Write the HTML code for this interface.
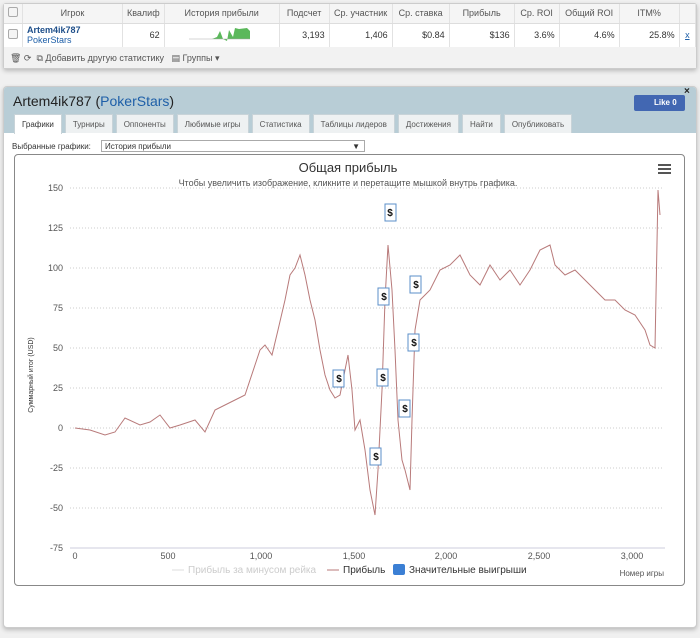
<!DOCTYPE html>
<html><head><meta charset="utf-8"><style>
*{box-sizing:border-box;margin:0;padding:0}
body{width:700px;height:638px;background:#f0f0f0;font-family:"Liberation Sans","DejaVu Sans",sans-serif;font-size:9px;color:#333;position:relative;overflow:hidden}
.p1{position:absolute;left:3px;top:3px;width:694px;height:66px;background:#fff;border:1px solid #ccc;border-radius:3px;box-shadow:0 2px 4px #bbb}
table{border-collapse:collapse;position:absolute;left:0;top:0;width:692px}
td{border-right:1px solid #e2e2e2;padding:0 4px;height:19px;text-align:right;white-space:nowrap;overflow:hidden}
tr.h td{background:#f5f5f5;text-align:center;color:#555;border-bottom:1px solid #ddd}
tr.d td{height:24px;border-bottom:1px solid #ddd}
.cb{display:inline-block;width:10px;height:10px;border:1px solid #aaa;border-radius:2px;background:#f4f4f4}
.tb{position:absolute;left:0;top:43px;width:692px;height:21px;background:#f2f2f2;color:#555;padding:6px 6px;font-size:9px}
.p2{position:absolute;left:3px;top:86px;width:694px;height:542px;background:#fff;border:1px solid #ccc;border-radius:4px;box-shadow:0 2px 4px #bbb;overflow:hidden}
.hd{position:absolute;left:0;top:0;width:694px;height:46px;background:#b8cdd6}
.title{position:absolute;left:9px;top:6px;font-size:14px;color:#222}
.title span{color:#1e5fa8}
.like{position:absolute;right:13px;top:8px;width:51px;height:16px;background:#4267b2;border-radius:2px;color:#fff;font-size:8px;font-weight:bold;line-height:16px;padding-left:20px}
.tabs{position:absolute;left:10px;top:27px}
.tab{float:left;height:19px;margin-right:3px;background:#eef1f2;border:1px solid #c8d3d8;border-bottom:none;padding:5px 7px 0;font-size:8px;color:#555}
.tab.a{background:#fff;color:#333;height:20px}
.sel{position:absolute;left:8px;top:55px;font-size:8px;color:#333}
.sel div{position:absolute;left:89px;top:-2px;width:264px;height:12px;border:1px solid #aaa;padding:1px 3px;white-space:nowrap}
.chart{position:absolute;left:10px;top:67px;width:671px;height:432px;border:1px solid #888;border-radius:4px}
</style></head><body>
<div class="p1">
<table>
<tr class="h"><td style="width:17px"><span class="cb"></span></td><td style="width:100px">Игрок</td><td style="width:35px">Квалиф</td><td style="width:115px">История прибыли</td><td style="width:50px">Подсчет</td><td style="width:63px">Ср. участник</td><td style="width:57px">Ср. ставка</td><td style="width:65px">Прибыль</td><td style="width:45px">Ср. ROI</td><td style="width:60px">Общий ROI</td><td style="width:60px">ITM%</td><td></td></tr>
<tr class="d"><td><span class="cb"></span></td><td style="text-align:left;line-height:10px"><b style="color:#1e4f8a">Artem4ik787</b><br><span style="color:#1e5fa8">PokerStars</span></td><td>62</td><td style="text-align:center"><svg width="70" height="18"><path d="M2 14 L25 14 L30 12 L33 6 L36 14 L40 16 L42 5 L46 12 L48 3 L52 4 L60 3 L63 6 L63 14 L30 14Z" fill="#5bb85b"/><line x1="2" y1="14" x2="63" y2="14" stroke="#aaa" stroke-width=".5"/></svg></td><td>3,193</td><td>1,406</td><td>$0.84</td><td>$136</td><td>3.6%</td><td>4.6%</td><td>25.8%</td><td style="text-align:center;color:#1e5fa8;text-decoration:underline">x</td></tr>
</table>
<div class="tb">🗑 ⟳ &nbsp;⧉ Добавить другую статистику &nbsp;&nbsp;▤ Группы ▾</div>
</div>
<div style="position:absolute;left:684px;top:86px;font-size:10px;font-weight:bold;color:#222;z-index:3">×</div>
<div class="p2">
<div class="hd">
<div class="title">Artem4ik787 (<span>PokerStars</span>)</div>
<div class="like">Like 0</div>
<div class="tabs"><div class="tab a">Графики</div><div class="tab">Турниры</div><div class="tab">Оппоненты</div><div class="tab">Любимые игры</div><div class="tab">Статистика</div><div class="tab">Таблицы лидеров</div><div class="tab">Достижения</div><div class="tab">Найти</div><div class="tab">Опубликовать</div></div>
</div>
<div class="sel">Выбранные графики:<div>История прибыли<span style="position:absolute;right:4px">▼</span></div></div>
<div class="chart"></div>
</div>
<svg style="position:absolute;left:0;top:0" width="700" height="638" font-family="Liberation Sans, DejaVu Sans, sans-serif">
<g stroke="#ccc" stroke-dasharray="1,2" stroke-width="1">
<line x1="70" x2="662" y1="188" y2="188"/><line x1="70" x2="662" y1="228" y2="228"/><line x1="70" x2="662" y1="268" y2="268"/><line x1="70" x2="662" y1="308" y2="308"/><line x1="70" x2="662" y1="348" y2="348"/><line x1="70" x2="662" y1="388" y2="388"/><line x1="70" x2="662" y1="428" y2="428"/><line x1="70" x2="662" y1="468" y2="468"/><line x1="70" x2="662" y1="508" y2="508"/></g>
<line x1="70" x2="665" y1="548" y2="548" stroke="#ccd" stroke-width="1"/>
<g font-size="9" fill="#555" text-anchor="end"><text x="63" y="191">150</text><text x="63" y="231">125</text><text x="63" y="271">100</text><text x="63" y="311">75</text><text x="63" y="351">50</text><text x="63" y="391">25</text><text x="63" y="431">0</text><text x="63" y="471">-25</text><text x="63" y="511">-50</text><text x="63" y="551">-75</text></g>
<g font-size="9" fill="#555" text-anchor="middle"><text x="75" y="559">0</text><text x="168" y="559">500</text><text x="261" y="559">1,000</text><text x="354" y="559">1,500</text><text x="446" y="559">2,000</text><text x="539" y="559">2,500</text><text x="632" y="559">3,000</text></g>
<text x="33" y="375" font-size="7" fill="#333" text-anchor="middle" transform="rotate(-90 33 375)">Суммарный итог (USD)</text>
<text x="348" y="172" font-size="13" fill="#333" text-anchor="middle">Общая прибыль</text>
<text x="348" y="186" font-size="9" fill="#555" text-anchor="middle">Чтобы увеличить изображение, кликните и перетащите мышкой внутрь графика.</text>
<g fill="#555"><rect x="658" y="164" width="13" height="2"/><rect x="658" y="168" width="13" height="2"/><rect x="658" y="172" width="13" height="2"/></g>
<polyline fill="none" stroke="#b87a7a" stroke-width="1" points="75,428 90,430 105,435 115,432 125,418 140,425 150,422 160,415 170,428 180,425 195,420 205,432 215,410 225,405 235,400 245,395 255,365 260,350 265,345 272,355 278,330 285,300 290,275 295,268 300,255 305,275 310,300 315,320 320,350 325,375 330,390 335,398 340,395 345,370 348,355 352,390 355,430 360,420 365,450 370,490 375,515 378,470 382,390 385,300 388,245 392,290 395,350 398,420 402,460 405,470 410,490 412,420 415,330 420,300 425,295 430,290 440,270 450,265 460,255 470,275 480,285 490,265 500,280 510,270 520,285 530,270 540,250 550,245 555,265 565,275 575,270 585,280 595,290 605,300 615,300 625,310 635,315 645,330 650,345 655,348 658,190 660,215"/>
<g font-size="10" font-weight="bold" fill="#111" text-anchor="middle">
<rect x="385" y="204" width="11" height="17" fill="#fff" stroke="#5b8fc8"/><text x="390" y="216">$</text>
<rect x="378" y="288" width="11" height="17" fill="#fff" stroke="#5b8fc8"/><text x="384" y="300">$</text>
<rect x="333" y="370" width="11" height="17" fill="#fff" stroke="#5b8fc8"/><text x="339" y="382">$</text>
<rect x="377" y="369" width="11" height="17" fill="#fff" stroke="#5b8fc8"/><text x="383" y="381">$</text>
<rect x="370" y="448" width="11" height="17" fill="#fff" stroke="#5b8fc8"/><text x="376" y="460">$</text>
<rect x="399" y="400" width="11" height="17" fill="#fff" stroke="#5b8fc8"/><text x="405" y="412">$</text>
<rect x="410" y="276" width="11" height="17" fill="#fff" stroke="#5b8fc8"/><text x="416" y="288">$</text>
<rect x="408" y="334" width="11" height="17" fill="#fff" stroke="#5b8fc8"/><text x="414" y="346">$</text>
</g>
<g font-size="10"><line x1="172" x2="184" y1="570" y2="570" stroke="#ddd"/><text x="188" y="573" fill="#ccc">Прибыль за минусом рейка</text>
<line x1="327" x2="339" y1="570" y2="570" stroke="#b87a7a"/><text x="343" y="573" fill="#333">Прибыль</text>
<rect x="393" y="564" width="12" height="11" rx="2" fill="#3b7fd4"/><text x="409" y="573" fill="#333">Значительные выигрыши</text></g>
<text x="664" y="576" font-size="8" fill="#555" text-anchor="end">Номер игры</text>
</svg>
</body></html>
